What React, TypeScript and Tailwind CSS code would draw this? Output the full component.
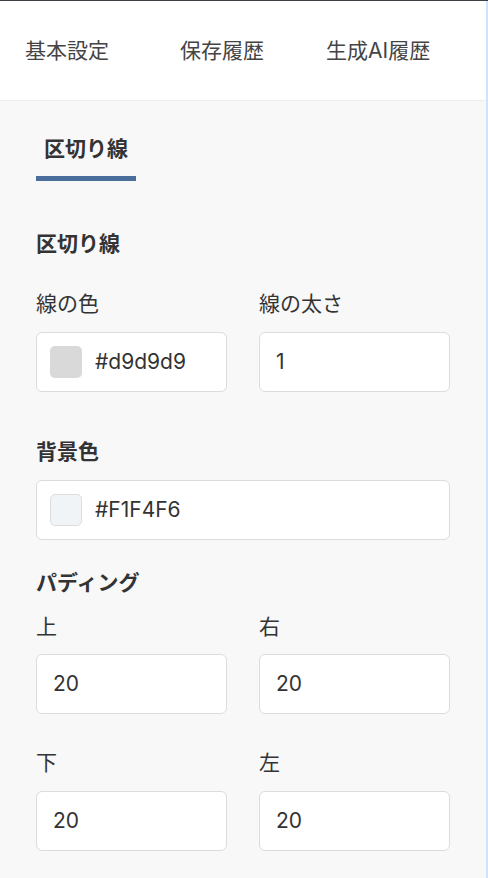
import React from "react";

const font = { fontFamily: 'Inter, "Noto Sans CJK JP", sans-serif' };

function Label({ children, bold }: { children: React.ReactNode; bold?: boolean }) {
  return (
    <div
      className={
        "text-[21px] leading-[28px] text-[#333333] " + (bold ? "font-bold" : "font-normal")
      }
    >
      {children}
    </div>
  );
}

function ColorInput({ color, value, bordered }: { color: string; value: string; bordered?: boolean }) {
  return (
    <div className="flex h-[60px] items-center gap-[13px] rounded-[6px] border border-[#dcdcdc] bg-white pl-[13px]">
      <span
        className={
          "h-[32px] w-[32px] rounded-[5px] " + (bordered ? "border border-[#dddddd]" : "")
        }
        style={{ backgroundColor: color }}
      />
      <span className="text-[21px] text-[#333333]">{value}</span>
    </div>
  );
}

function NumberInput({ value }: { value: string }) {
  return (
    <div className="flex h-[60px] items-center rounded-[6px] border border-[#dcdcdc] bg-white pl-[16px] text-[21px] text-[#333333]">
      {value}
    </div>
  );
}

export default function App() {
  return (
    <div className="min-h-[878px] w-[488px] border-t border-[#3c3f44]" style={font}>
      <div className="min-h-[877px] w-[488px] border-r-2 border-[#cfe4fc] bg-[#f8f8f8]">
        {/* top tabs */}
        <div className="flex h-[100px] items-center border-b border-[#eeeeee] bg-white pl-[25px] text-[21px] text-[#444444]">
          <div className="w-[155px]">基本設定</div>
          <div className="w-[146px]">保存履歴</div>
          <div>生成AI履歴</div>
        </div>

        <div className="px-[36px]">
          {/* section tab */}
          <div className="pt-[34px]">
            <div className="inline-block border-b-[5px] border-[#4a6e9b] px-[8px] pb-[13px] text-[21px] font-bold leading-[28px] text-[#333333]">
              区切り線
            </div>
          </div>

          <div className="mt-[49px]">
            <Label bold>区切り線</Label>
          </div>

          <div className="mt-[32px] grid grid-cols-2 gap-[32px]">
            <div>
              <div className="mb-[14px]">
                <Label>線の色</Label>
              </div>
              <ColorInput color="#d9d9d9" value="#d9d9d9" />
            </div>
            <div>
              <div className="mb-[14px]">
                <Label>線の太さ</Label>
              </div>
              <NumberInput value="1" />
            </div>
          </div>

          <div className="mt-[46px] mb-[14px]">
            <Label bold>背景色</Label>
          </div>
          <ColorInput color="#F1F4F6" value="#F1F4F6" bordered />

          <div className="mt-[29px] mb-[16px]">
            <Label bold>パディング</Label>
          </div>
          <div className="grid grid-cols-2 gap-x-[32px] gap-y-[35px]">
            <div>
              <div className="mb-[13px]">
                <Label>上</Label>
              </div>
              <NumberInput value="20" />
            </div>
            <div>
              <div className="mb-[13px]">
                <Label>右</Label>
              </div>
              <NumberInput value="20" />
            </div>
            <div>
              <div className="mb-[14px]">
                <Label>下</Label>
              </div>
              <NumberInput value="20" />
            </div>
            <div>
              <div className="mb-[14px]">
                <Label>左</Label>
              </div>
              <NumberInput value="20" />
            </div>
          </div>
        </div>
      </div>
    </div>
  );
}
